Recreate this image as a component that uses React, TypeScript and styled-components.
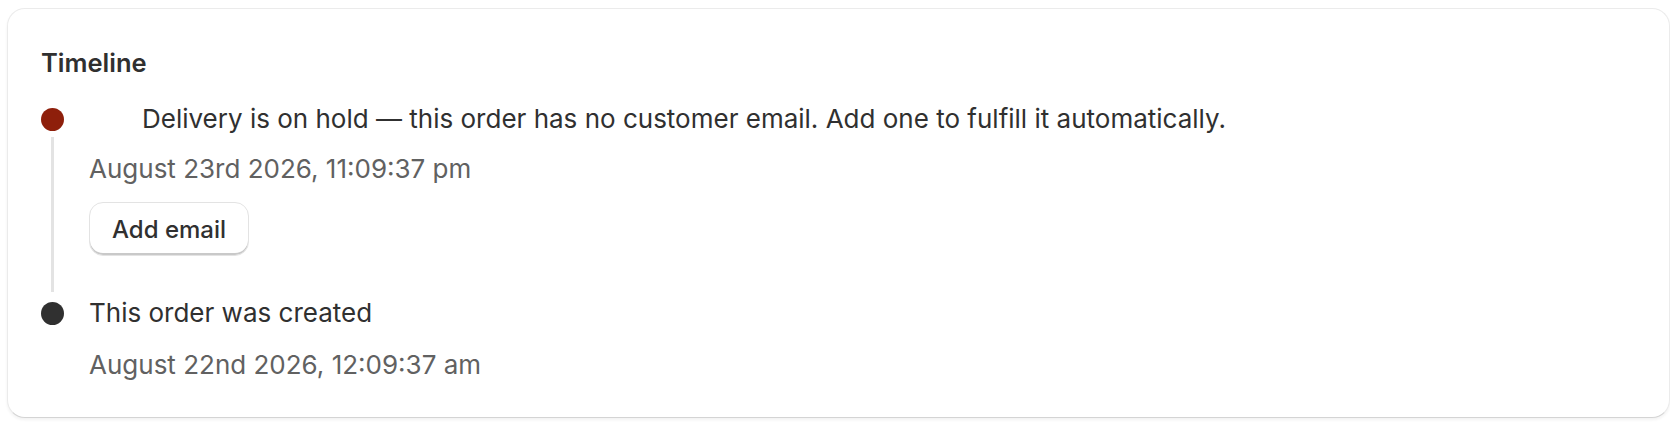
import styled, { createGlobalStyle } from "styled-components"

const GlobalStyle = createGlobalStyle`
  html, body {
    margin: 0;
    padding: 0;
    background: #ffffff;
  }

  body {
    font-family: Inter, "Noto Sans", "Liberation Sans", sans-serif;
    color: #303030;
    -webkit-font-smoothing: antialiased;
  }
`

type TimelineEvent = {
  id: string
  message: string
  date: string
  tone: "critical" | "neutral"
  indented?: boolean
  action?: string
}

const events: TimelineEvent[] = [
  {
    id: "hold",
    message:
      "Delivery is on hold — this order has no customer email. Add one to fulfill it automatically.",
    date: "August 23rd 2026, 11:09:37 pm",
    tone: "critical",
    indented: true,
    action: "Add email",
  },
  {
    id: "created",
    message: "This order was created",
    date: "August 22nd 2026, 12:09:37 am",
    tone: "neutral",
  },
]

export default function App() {
  return (
    <>
      <GlobalStyle />
      <Page>
        <Card>
          <Title>Timeline</Title>
          <EventList>
            {events.map((event, index) => {
              const isLast = index === events.length - 1
              return (
                <EventItem key={event.id} $last={isLast}>
                  <Rail>
                    <Dot $tone={event.tone} />
                    {!isLast && <Connector />}
                  </Rail>
                  <EventBody>
                    <Message $indented={event.indented}>{event.message}</Message>
                    <EventDate $last={isLast}>{event.date}</EventDate>
                    {event.action && <Button type="button">{event.action}</Button>}
                  </EventBody>
                </EventItem>
              )
            })}
          </EventList>
        </Card>
      </Page>
    </>
  )
}

const Page = styled.main`
  padding: 8px 0 14px 7px;
`

const Card = styled.section`
  display: flex;
  flex-direction: column;

  padding: 38px 32px 36px 33px;

  border: 1px solid #ebebeb;
  border-bottom-color: #d4d4d4;
  border-radius: 18px;
  background: #ffffff;
  box-shadow: 0 2px 3px rgba(26, 26, 26, 0.06);
`

const Title = styled.h2`
  margin: 0;

  font-size: 25.5px;
  font-weight: 600;
  line-height: 32px;
  color: #303030;
`

const EventList = styled.ol`
  display: flex;
  flex-direction: column;
  gap: 5px;

  margin: 24px 0 0;
  padding: 0;

  list-style: none;
`

const EventItem = styled.li<{ $last?: boolean }>`
  display: grid;
  grid-template-columns: 23px 1fr;
  column-gap: 25px;

  padding-bottom: ${({ $last }) => ($last ? "0" : "36px")};
`

const Rail = styled.div`
  display: flex;
  flex-direction: column;
  align-items: center;

  padding-top: 5px;
`

const Dot = styled.span<{ $tone: "critical" | "neutral" }>`
  display: block;
  flex: none;

  width: 23px;
  height: 23px;

  border-radius: 50%;
  background: ${({ $tone }) => ($tone === "critical" ? "#8e1f0b" : "#303030")};
`

const Connector = styled.span`
  display: block;
  flex: 1;

  width: 3px;
  margin-top: 6px;
  margin-bottom: -36px;

  background: #e3e3e3;
`

const EventBody = styled.div`
  display: flex;
  flex-direction: column;
  align-items: flex-start;
`

const Message = styled.p<{ $indented?: boolean }>`
  margin: 0;
  padding-left: ${({ $indented }) => ($indented ? "53px" : "0")};

  font-size: 26px;
  line-height: 32px;
  color: #303030;
`

const EventDate = styled.span<{ $last?: boolean }>`
  margin-top: ${({ $last }) => ($last ? "20px" : "18px")};

  font-size: 26px;
  line-height: 32px;
  color: #616161;
`

const Button = styled.button`
  margin-top: 17px;
  height: 54px;
  padding: 0 22px;

  border: 1px solid #e3e3e3;
  border-radius: 14px;
  background: #ffffff;
  box-shadow: inset 0 -2px 0 #c9c9c9;

  font-family: inherit;
  font-size: 24px;
  font-weight: 500;
  color: #303030;

  cursor: pointer;
`
